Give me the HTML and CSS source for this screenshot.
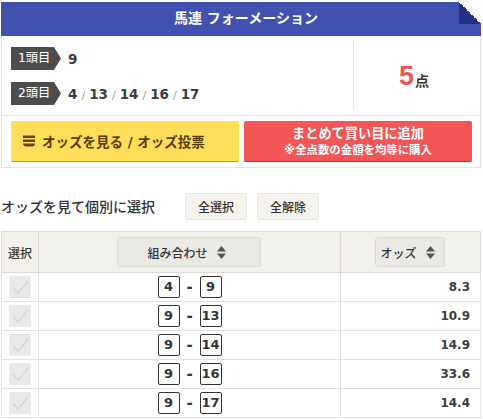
FILE: index.html
```html
<!DOCTYPE html>
<html lang="ja">
<head>
<meta charset="utf-8">
<title>馬連 フォーメーション</title>
<link rel="stylesheet" href="styles.css">
</head>
<body>
<section class="summary">
  <h1 class="title">馬連 フォーメーション<span class="fold"></span></h1>
  <div class="info">
    <div class="picks">
      <div class="pick"><span class="tag">1頭目</span><span class="nums">9</span></div>
      <div class="pick"><span class="tag">2頭目</span><span class="nums">4<i>/</i>13<i>/</i>14<i>/</i>16<i>/</i>17</span></div>
    </div>
    <div class="count"><b>5</b><span>点</span></div>
  </div>
  <div class="actions">
    <a class="btn yellow">
      <svg class="stack" viewBox="0 0 12 12" width="12" height="12"><path d="M0 0.500h12v2.600H0zM0 4.500h12v2.600H0zM0 8.500h12c0 2-1.500 3-3 3H3c-1.500 0-3-1-3-3z"/></svg>
      <span>オッズを見る / オッズ投票</span>
    </a>
    <a class="btn red"><span class="main">まとめて買い目に追加</span><span class="sub">※全点数の金額を均等に購入</span></a>
  </div>
</section>
<div class="select-bar">
  <h2>オッズを見て個別に選択</h2>
  <button class="mini">全選択</button>
  <button class="mini">全解除</button>
</div>
<table class="odds">
  <thead>
    <tr>
      <th class="c-check">選択</th>
      <th class="c-combo"><span class="sort wide">組み合わせ<svg viewBox="0 0 9 13" width="9" height="13"><path d="M4.500 0 9 5.500H0zM0 7.500h9L4.500 13z"/></svg></span></th>
      <th class="c-odds"><span class="sort narrow">オッズ<svg viewBox="0 0 9 13" width="9" height="13"><path d="M4.500 0 9 5.500H0zM0 7.500h9L4.500 13z"/></svg></span></th>
    </tr>
  </thead>
  <tbody>
    <tr><td class="c-check"><span class="box"><svg viewBox="0 0 22 22" width="22" height="22"><path d="M4 11.500 9 17 19 5"/></svg></span></td><td class="c-combo"><div class="combo"><span class="num">4</span><span class="dash">-</span><span class="num">9</span></div></td><td class="c-odds">8.3</td></tr>
    <tr><td class="c-check"><span class="box"><svg viewBox="0 0 22 22" width="22" height="22"><path d="M4 11.500 9 17 19 5"/></svg></span></td><td class="c-combo"><div class="combo"><span class="num">9</span><span class="dash">-</span><span class="num">13</span></div></td><td class="c-odds">10.9</td></tr>
    <tr><td class="c-check"><span class="box"><svg viewBox="0 0 22 22" width="22" height="22"><path d="M4 11.500 9 17 19 5"/></svg></span></td><td class="c-combo"><div class="combo"><span class="num">9</span><span class="dash">-</span><span class="num">14</span></div></td><td class="c-odds">14.9</td></tr>
    <tr><td class="c-check"><span class="box"><svg viewBox="0 0 22 22" width="22" height="22"><path d="M4 11.500 9 17 19 5"/></svg></span></td><td class="c-combo"><div class="combo"><span class="num">9</span><span class="dash">-</span><span class="num">16</span></div></td><td class="c-odds">33.6</td></tr>
    <tr><td class="c-check"><span class="box"><svg viewBox="0 0 22 22" width="22" height="22"><path d="M4 11.500 9 17 19 5"/></svg></span></td><td class="c-combo"><div class="combo"><span class="num">9</span><span class="dash">-</span><span class="num">17</span></div></td><td class="c-odds">14.4</td></tr>
  </tbody>
</table>
</body>
</html>
```
FILE: styles.css
```css
* { box-sizing: border-box; }
html, body { margin: 0; padding: 0; overflow: hidden; }
body {
  width: 483px;
  height: 419px;
  background: #fff;
  color: #333;
  font-family: "DejaVu Sans", "Noto Sans CJK JP", sans-serif;
  font-size: 13px;
  padding: 2px 2px 0 1px;
}
.summary { border: 1px solid #e5e5e5; border-top: 0; height: 166px; }
.title {
  position: relative;
  margin: 0 -1px;
  height: 34px;
  padding-left: 10px;
  background: #4051b0;
  color: #fff;
  font-size: 14px;
  font-weight: 700;
  line-height: 32px;
  text-align: center;
  overflow: hidden;
}
.fold {
  position: absolute;
  right: 0;
  top: 0;
  width: 22px;
  height: 22px;
  background: linear-gradient(45deg, #223087 50%, #fff 50%);
}
.info { display: flex; height: 80px; border-bottom: 1px solid #e5e5e5; padding-top: 5px; }
.picks { width: 351px; padding: 6px 0 0 9px; display: flex; flex-direction: column; gap: 12px; }
.pick { display: flex; align-items: center; height: 23px; }
.tag {
  width: 50px;
  height: 23px;
  padding-left: 7px;
  background: #4d4d4d;
  color: #fff;
  font-size: 12.300px;
  line-height: 22px;
  clip-path: polygon(0 0, 43px 0, 50px 50%, 43px 100%, 0 100%);
}
.nums { margin-left: 7px; font-weight: 700; font-size: 13.500px; color: #3d3d3d; }
.nums i { font-style: normal; font-weight: 400; color: #999; font-size: 11px; margin: 0 4px; }
.count {
  flex: 1;
  margin-bottom: 5px;
  border-left: 1px solid #e5e5e5;
  display: flex;
  justify-content: center;
  align-items: center;
  gap: 1px;
  padding-right: 6px;
}
.count b { color: #f05454; font-size: 27px; line-height: 30px; font-family: "Liberation Sans", sans-serif; }
.count span { font-size: 14px; font-weight: 700; margin-top: 9px; }
.actions { display: flex; justify-content: space-between; padding: 5px 8px 0 9px; }
.btn {
  height: 41px;
  border-radius: 2px;
  font-weight: 700;
  display: flex;
  align-items: center;
  justify-content: center;
}
.yellow {
  width: 228px;
  background: #ffdf59;
  color: #5c3a08;
  border-bottom: 1px solid #b8952f;
  font-size: 13.500px;
  gap: 7px;
  justify-content: flex-start;
  padding-left: 12px;
}
.stack { fill: #6b3f0a; }
.red {
  width: 228px;
  background: #f45555;
  color: #fff;
  border-bottom: 1px solid #c72f2f;
  flex-direction: column;
}
.main { font-size: 13.200px; line-height: 18px; }
.sub { font-size: 11.400px; line-height: 15px; }
.select-bar { display: flex; align-items: center; height: 28px; margin-top: 24px; }
.select-bar h2 { margin: -1px 30px 0 0; font-size: 14px; font-weight: 500; width: 154px; white-space: nowrap; color: #333; }
.mini {
  height: 27px;
  width: 62px;
  margin-right: 10px;
  padding: 0;
  border: 1px solid #e6e3dc;
  border-radius: 3px;
  background: #f5f3ee;
  color: #333;
  font-family: inherit;
  font-size: 12px;
  font-weight: 500;
}
.odds { width: 480px; margin: 11px 0 0 0; border-collapse: collapse; table-layout: fixed; }
.odds th { height: 41px; background: #f3f1ec; border: 1px solid #dedbd4; padding: 0; font-size: 12px; font-weight: 500; }
.odds td { height: 29px; border: 1px solid #e2e2e2; padding: 0; }
.c-check { width: 37px; text-align: center; }
.c-combo { width: 302px; text-align: center; }
.c-odds { text-align: right; }
td.c-odds { padding-right: 10px; font-weight: 700; font-size: 12px; color: #3d3d3d; }
th.c-odds { text-align: left; padding-left: 34px; }
.sort {
  display: inline-flex;
  align-items: center;
  justify-content: center;
  gap: 9px;
  height: 30px;
  padding-right: 5px;
  background: #ebe9e4;
  border: 1px solid #dcdad5;
  border-radius: 3px;
  vertical-align: middle;
}
.sort svg { fill: #555; }
.wide { width: 144px; margin-left: -1px; }
.narrow { width: 70px; }
.box {
  display: flex;
  width: 22px;
  height: 22px;
  margin: 0 auto;
  background: #e9e9e9;
  border-radius: 2px;
}
.box svg { fill: none; stroke: #d6d6d6; stroke-width: 1.500; }
.combo { display: flex; align-items: center; justify-content: center; gap: 7px; }
.num {
  width: 22px;
  height: 22px;
  border: 1px solid #333;
  border-radius: 2px;
  font-size: 13px;
  font-weight: 700;
  line-height: 20px;
  text-align: center;
}
.dash { font-weight: 700; font-size: 15px; width: 6px; text-align: center; }
```
